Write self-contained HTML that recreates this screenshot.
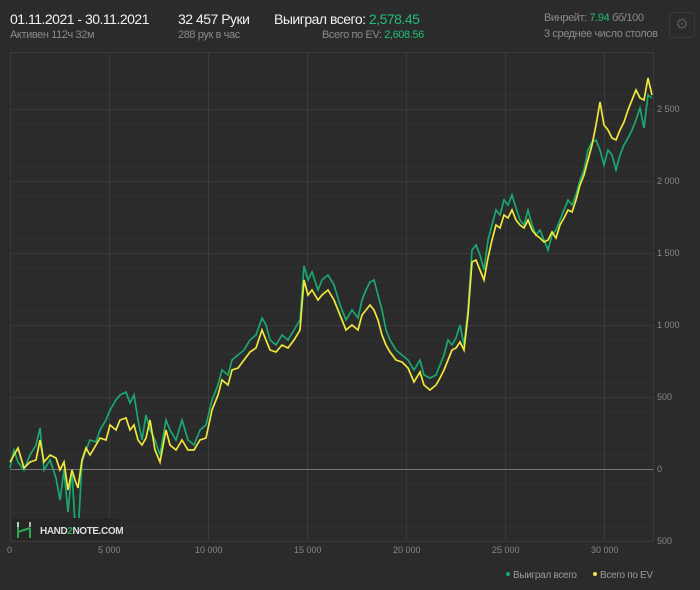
<!DOCTYPE html>
<html><head><meta charset="utf-8"><style>
body{margin:0;width:700px;height:590px;background:#2b2b2b;font-family:"Liberation Sans",sans-serif;overflow:hidden;position:relative;color:#ddd}
.t{position:absolute;white-space:nowrap}
.g{color:#1fbf76}
.s{font-size:11px;color:#8a8a8a;letter-spacing:-0.4px}
.b{font-size:14px;color:#f2f2f2;letter-spacing:-0.5px}
</style></head><body>
<div class="t b" style="left:10px;top:11px">01.11.2021 - 30.11.2021</div>
<div class="t s" style="left:10px;top:29px">Активен 112ч 32м</div>
<div class="t b" style="left:178px;top:11px">32 457 Руки</div>
<div class="t s" style="left:178px;top:29px">288 рук в час</div>
<div class="t b" style="left:274px;top:11px">Выиграл всего: <span class="g">2,578.45</span></div>
<div class="t s" style="left:322px;top:29px">Всего по EV: <span class="g">2,608.56</span></div>
<div class="t s" style="left:544px;top:12px">Винрейт: <span class="g">7.94</span> бб/100</div>
<div class="t s" style="left:544px;top:28px">3 среднее число столов</div>
<div class="t" style="left:669px;top:12px;width:24px;height:24px;border:1px solid #3a3a3a;border-radius:3px;color:#555;font-size:15px;text-align:center;line-height:24px">⚙</div>
<svg class="t" style="left:0;top:0" width="700" height="590">
<g stroke="#303030" stroke-width="1">
<path d="M10 66H653M10 80H653M10 95H653M10 124H653M10 138H653M10 152H653M10 167H653M10 196H653M10 210H653M10 224H653M10 239H653M10 268H653M10 282H653M10 296H653M10 311H653M10 340H653M10 354H653M10 368H653M10 383H653M10 412H653M10 426H653M10 440H653M10 455H653M10 484H653M10 498H653M10 512H653M10 527H653"/>
</g>
<g stroke="#3a3a3a" stroke-width="1">
<path d="M10.5 52V541M109.5 52V541M208.5 52V541M307.5 52V541M406.5 52V541M505.5 52V541M604.5 52V541M653.5 52V541"/>
<path d="M10 52.5H653M10 109.5H653M10 181.5H653M10 253.5H653M10 325.5H653M10 397.5H653M10 541.5H653"/>
</g>
<path d="M10 469.5H653" stroke="#777" stroke-width="1"/>
<g font-size="9" fill="#888" font-family="Liberation Sans">
<text x="657" y="112">2 500</text><text x="657" y="184">2 000</text><text x="657" y="256">1 500</text><text x="657" y="328">1 000</text><text x="657" y="400">500</text><text x="657" y="472">0</text><text x="657" y="544">500</text>
<text x="7" y="553">0</text><text x="98" y="553">5 000</text><text x="195" y="553">10 000</text><text x="294" y="553">15 000</text><text x="393" y="553">20 000</text><text x="492" y="553">25 000</text><text x="591" y="553">30 000</text>
</g>
<polyline fill="none" stroke="#19a970" stroke-width="1.7" points="10,468 14,450 18,462 24,470 30,455 36,445 40,428 44,470 50,460 56,478 60,500 64,470 68,512 72,470 75,525 78,535 82,462 86,450 90,440 96,442 100,430 106,420 110,410 116,400 120,395 126,392 130,403 134,395 138,420 142,440 146,415 150,430 155,440 160,455 166,420 170,430 176,440 182,420 188,440 194,445 200,430 206,425 212,400 218,385 222,370 228,375 232,360 238,355 244,350 250,340 256,335 262,318 266,325 270,340 276,345 282,335 288,340 294,330 300,320 304,266 308,280 312,272 318,290 322,280 328,275 334,285 340,305 346,320 352,310 358,318 362,300 366,290 370,282 374,280 378,295 382,310 386,330 390,340 396,350 402,355 408,360 414,370 420,360 424,375 430,378 436,375 440,365 444,355 448,340 452,345 456,338 460,325 464,345 468,310 472,250 476,245 480,255 484,270 488,240 492,225 496,210 500,215 504,200 508,205 512,195 516,208 520,220 524,225 528,210 532,225 536,235 540,230 544,240 548,250 552,235 556,230 560,220 564,210 568,200 572,205 576,195 580,180 584,170 588,150 592,142 596,140 600,150 604,165 608,150 612,155 616,170 620,155 624,145 628,138 632,130 636,120 640,108 644,128 648,95 652,98"/>
<polyline fill="none" stroke="#f0e83a" stroke-width="1.7" points="10,462 14,455 18,448 24,468 30,462 36,460 40,440 44,462 50,455 56,458 60,470 64,462 68,490 72,470 75,480 78,488 82,460 86,448 90,455 96,445 100,438 106,440 110,425 116,430 120,420 126,418 130,430 134,425 138,440 142,445 146,438 150,420 155,450 160,462 166,430 170,445 176,450 182,440 188,450 194,450 200,440 206,438 212,410 218,395 222,380 228,385 232,370 238,368 244,360 250,352 256,348 262,330 266,340 270,350 276,352 282,345 288,348 294,340 300,330 304,280 308,295 312,290 318,300 322,295 328,290 334,300 340,315 346,330 352,325 358,330 362,315 366,310 370,305 374,310 378,320 382,335 386,345 390,352 396,360 402,362 408,368 414,382 420,372 424,385 430,390 436,385 440,378 444,370 448,360 452,350 456,348 460,342 464,350 468,315 472,262 476,260 480,270 484,280 488,258 492,240 496,225 500,228 504,215 508,218 512,210 516,220 520,225 524,228 528,220 532,230 536,235 540,238 544,242 548,240 552,232 556,238 560,225 564,218 568,210 572,212 576,200 580,185 584,175 588,160 592,145 596,125 600,102 604,125 608,130 612,138 616,140 620,130 624,122 628,110 632,100 636,90 640,98 644,100 648,78 652,95"/>
<rect x="12" y="518" width="108" height="22" fill="#262626"/>
<path d="M18 522V532M18 532L30 528M30 528V538M18 528L18 538" stroke="#2fa84f" stroke-width="2" fill="none"/>
<path d="M18 522V527M30 522V527" stroke="#ddd" stroke-width="1.5"/>
<text x="40" y="534" font-size="10" font-weight="bold" fill="#ddd" font-family="Liberation Sans" letter-spacing="-0.4">HAND<tspan fill="#2fa84f">2</tspan>NOTE.COM</text>
<circle cx="508" cy="574" r="2" fill="#19a970"/><text x="513" y="578" font-size="10" fill="#999" font-family="Liberation Sans" letter-spacing="-0.3">Выиграл всего</text>
<circle cx="595" cy="574" r="2" fill="#f0e83a"/><text x="600" y="578" font-size="10" fill="#999" font-family="Liberation Sans" letter-spacing="-0.3">Всего по EV</text>
</svg>
</body></html>
